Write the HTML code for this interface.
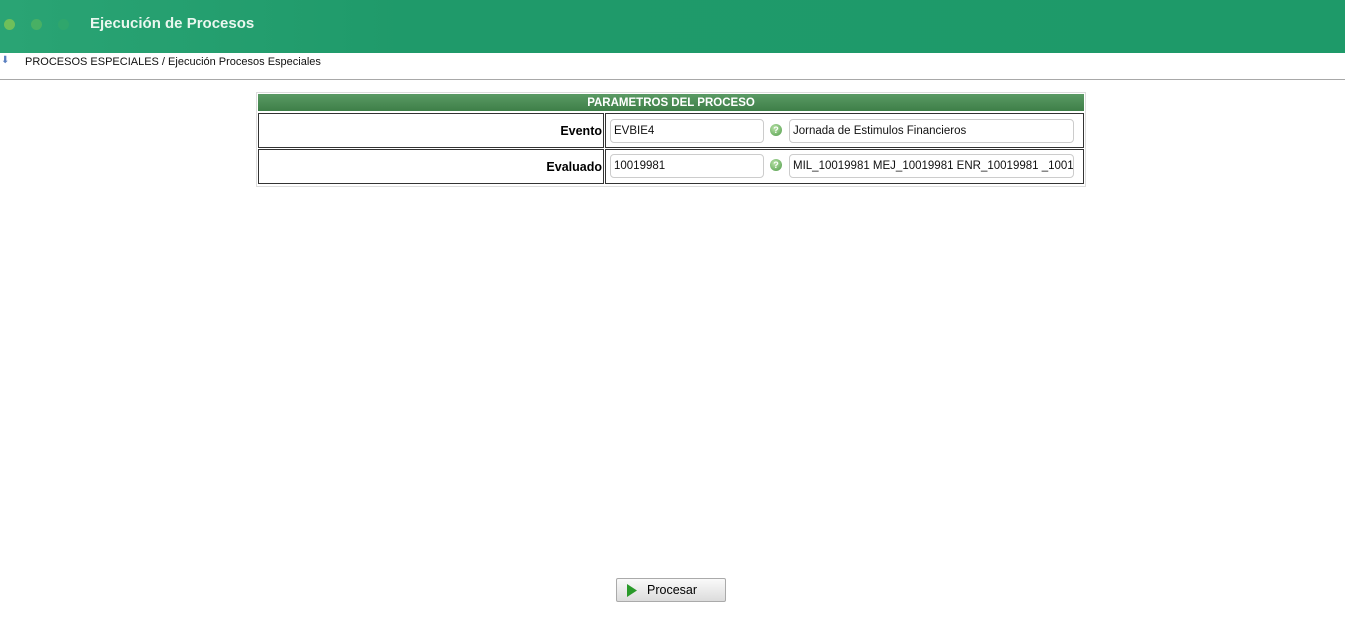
<!DOCTYPE html>
<html><head><style>
body{margin:0;width:1345px;height:623px;background:#fff;font-family:"Liberation Sans",sans-serif;position:relative;overflow:hidden}
.hd{position:absolute;left:0;top:0;width:1345px;height:53px;background:linear-gradient(90deg,#2aa474 0%,#1f9a6a 30%,#1e9a69 100%)}
.dot{position:absolute;top:19px;width:11px;height:11px;border-radius:50%}
.ttl{position:absolute;left:90px;top:15px;color:#eaf7ef;font-weight:bold;font-size:15px}
.bc{position:absolute;left:25px;top:56px;font-size:11px;color:#111}
.line{position:absolute;left:0;top:79px;width:1345px;height:1px;background:#a8a8a8}
.tbl{position:absolute;left:256px;top:92px;width:828px;height:93px;border:1px solid #ddd}
.bar{position:absolute;left:258px;top:94px;width:826px;height:17px;background:linear-gradient(#5a9a64,#3e7f48);color:#fff;font-weight:bold;font-size:11.5px;text-align:center;line-height:18px}
.cell{position:absolute;border:1px solid #333;box-sizing:border-box}
.lbl{text-align:right;font-weight:bold;font-size:12.5px;padding-right:1px;box-sizing:border-box}
.inp{position:absolute;border:1px solid #ccc;border-radius:4px;box-sizing:border-box;font-size:11.5px;padding-left:3px;line-height:22px;color:#111;white-space:nowrap;overflow:hidden;background:#fff}
.q{position:absolute;width:12px;height:12px;border-radius:50%;background:radial-gradient(circle at 40% 35%,#b9e3a8,#4e9a48);color:#fff;font-size:9px;font-weight:bold;text-align:center;line-height:12px}
.btn{position:absolute;left:616px;top:578px;width:110px;height:24px;box-sizing:border-box;border:1px solid #aaa;border-radius:2px;background:linear-gradient(#fafafa,#dcdcdc);font-size:12.5px;line-height:22px}
</style></head><body>
<div class="hd">
<div class="dot" style="left:4px;background:#6fbf5a"></div>
<div class="dot" style="left:31px;background:#48b064"></div>
<div class="dot" style="left:58px;background:#2fa66c"></div>
<div class="ttl">Ejecución de Procesos</div>
</div>
<div style="position:absolute;left:1px;top:55px;color:#5a7fc0;font-size:10px">&#x2B07;</div>
<div class="bc">PROCESOS ESPECIALES / Ejecución Procesos Especiales</div>
<div class="line"></div>
<div class="tbl"></div>
<div class="bar">PARAMETROS DEL PROCESO</div>
<div class="cell lbl" style="left:258px;top:113px;width:346px;height:35px;line-height:34px">Evento</div>
<div class="cell" style="left:605px;top:113px;width:479px;height:35px"></div>
<div class="cell lbl" style="left:258px;top:149px;width:346px;height:35px;line-height:34px">Evaluado</div>
<div class="cell" style="left:605px;top:149px;width:479px;height:35px"></div>
<div class="inp" style="left:610px;top:119px;width:154px;height:24px">EVBIE4</div>
<div class="q" style="left:770px;top:124px">?</div>
<div class="inp" style="left:789px;top:119px;width:285px;height:24px">Jornada de Estimulos Financieros</div>
<div class="inp" style="left:610px;top:154px;width:154px;height:24px">10019981</div>
<div class="q" style="left:770px;top:159px">?</div>
<div class="inp" style="left:789px;top:154px;width:285px;height:24px">MIL_10019981 MEJ_10019981 ENR_10019981 _10019981</div>
<div class="btn"><svg style="position:absolute;left:10px;top:5px" width="10" height="13"><path d="M0 0L10 6.5L0 13Z" fill="#2a9a2a"/></svg><span style="position:absolute;left:30px">Procesar</span></div>
</body></html>
